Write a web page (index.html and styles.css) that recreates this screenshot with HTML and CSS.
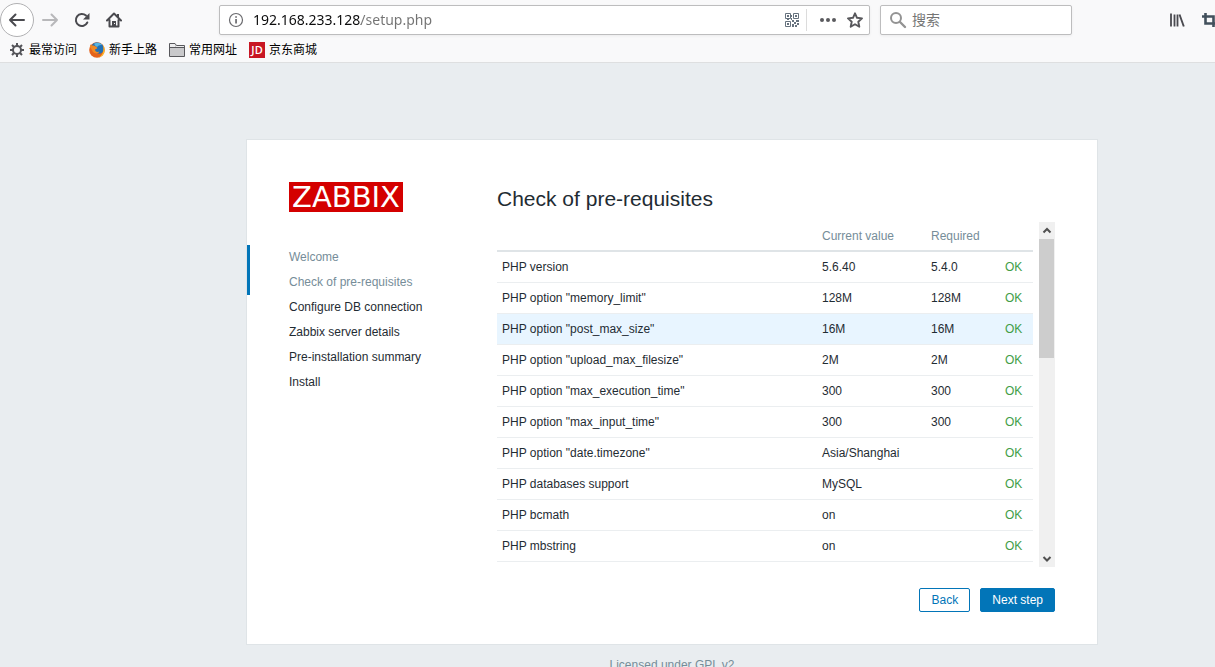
FILE: index.html
```html
<!DOCTYPE html>
<html lang="en">
<head>
<meta charset="utf-8">
<title>Installation</title>
<link rel="stylesheet" href="styles.css">
</head>
<body>
<header class="browser">
  <div class="toolbar">
    <div class="nav-buttons">
      <button class="tool tool-back" aria-label="Back"><svg width="18" height="16" viewBox="0 0 18 16"><path d="M16 8H2M7.500 2.500 2 8l5.500 5.500" fill="none" stroke="#4a4a4f" stroke-width="2" stroke-linecap="round" stroke-linejoin="round"/></svg></button>
      <button class="tool" aria-label="Forward"><svg width="18" height="16" viewBox="0 0 18 16"><path d="M2 8h14M10.500 2.500 16 8l-5.500 5.500" fill="none" stroke="#b8b8ba" stroke-width="2" stroke-linecap="round" stroke-linejoin="round"/></svg></button>
      <button class="tool" aria-label="Reload"><svg width="16" height="16" viewBox="0 0 16 16"><path d="M12 3.600A6 6 0 1 0 13.300 10.500" fill="none" stroke="#4a4a4f" stroke-width="2" stroke-linecap="round"/><path d="M15.500 1v6.500H9z" fill="#4a4a4f"/></svg></button>
      <button class="tool" aria-label="Home"><svg width="16" height="16" viewBox="0 0 16 16"><path d="M1 8.500 8 1.500l7 7M3.500 8v6.500h9V8" fill="none" stroke="#4a4a4f" stroke-width="2" stroke-linecap="round" stroke-linejoin="round"/><path d="M6 9h4v5H6zM11 2h2v4h-2z" fill="#4a4a4f"/><path d="M8 11h1v1H8z" fill="#f9f9fa"/></svg></button>
    </div>
    <div class="field address">
      <svg width="16" height="16" viewBox="0 0 16 16"><circle cx="8" cy="8" r="6.500" fill="none" stroke="#6a6a6e" stroke-width="1.200"/><path d="M7.200 7h1.700v4.500H7.200zM7.200 4.200h1.700v1.600H7.200z" fill="#6a6a6e"/></svg>
      <input class="address-input" type="text" aria-label="Address" value="192.168.233.128/setup.php">
      <button class="tool-small" aria-label="QR code"><svg width="16" height="16" viewBox="0 0 16 16"><path d="M1.500 1.500h5v5h-5zM9.500 1.500h5v5h-5zM1.500 9.500h5v5h-5z" fill="none" stroke="#66727e"/><path d="M3 3h2v2H3zM11 3h2v2h-2zM3 11h2v2H3zM8 8h2v2H8zM10 10h2v2h-2zM12 8h3v2h-3zM8 12h2v3H8zM11 13h2v2h-2zM13 11h2v2h-2zM7 3h1v2H7zM3 7h2v1H3zM7 6h1v2H7z" fill="#66727e"/></svg></button>
      <span class="divider"></span>
      <button class="tool-small" aria-label="Page actions"><svg width="18" height="16" viewBox="0 0 18 16" fill="#5a5a5e"><circle cx="3" cy="8" r="2"/><circle cx="9" cy="8" r="2"/><circle cx="15" cy="8" r="2"/></svg></button>
      <button class="tool-small" aria-label="Bookmark"><svg width="16" height="16" viewBox="0 0 16 16"><path d="M8 1.300l2 4.500 5 .6-3.700 3.400 1 4.900L8 12.200l-4.300 2.500 1-4.900L1 6.400l5-.6z" fill="none" stroke="#58585c" stroke-width="1.900" stroke-linejoin="round"/></svg></button>
    </div>
    <div class="field search">
      <svg width="18" height="18" viewBox="0 0 18 18"><circle cx="7" cy="7" r="5" fill="none" stroke="#939393" stroke-width="2"/><path d="M11 11l5 5" stroke="#939393" stroke-width="2.400" stroke-linecap="round"/></svg>
      <input class="search-input" type="text" aria-label="搜索" placeholder="搜索">
    </div>
    <div class="tool-extras">
      <button class="tool-small" aria-label="Library"><svg width="16" height="16" viewBox="0 0 16 16"><path d="M2 1.500v13M5.500 2.500v12M8.500 2.500v12" stroke="#4a4a4f" stroke-width="1.800"/><path d="M10.500 2.500l4.300 12" stroke="#4a4a4f" stroke-width="1.900"/></svg></button>
      <button class="tool-small" aria-label="Screenshot"><svg width="16" height="16" viewBox="0 0 16 16"><path d="M4.500 1v10.500H16M1 4.500h11.500V15" fill="none" stroke="#42505c" stroke-width="2.600"/></svg></button>
    </div>
  </div>
  <nav class="bookmarks">
    <a class="bookmark" href="#"><svg width="16" height="16" viewBox="0 0 16 16"><g stroke="#55555a" stroke-width="2"><path d="M8 1v14M1 8h14M3 3l10 10M13 3 3 13"/></g><circle cx="8" cy="8" r="4" fill="#f9f9fa" stroke="#55555a" stroke-width="2"/></svg>最常访问</a>
    <a class="bookmark" href="#"><svg width="16" height="16" viewBox="0 0 16 16"><circle cx="8" cy="8" r="7.800" fill="#e5631b"/><path d="M3.500 2.200C7-1 13 .5 14.500 5c.6 3-.5 6-3.500 6.800C7 12 5 9.500 5.500 7.500L8 6.500 6.500 4.500 3 4z" fill="#2270b5"/><path d="M5 1.800c3-2 7-1 8.500 1.500-2.500-.8-4 .2-5.500 1.700L6.500 4z" fill="#58b5e2"/><path d="M1 2c.5 1.200 1 1.500 2 1.500 1.500-.3 3 .2 3.700 1L8.500 6 6 7.500C6 9.500 8 10.500 10.500 9.500 9.500 12 6 12 4 10 3 8 2 6 1 5z" fill="#f08a24"/><path d="M14 3c3 4 2 11-4.500 12.600 4-2 6-6 4.500-12.600z" fill="#ffc22b"/></svg>新手上路</a>
    <a class="bookmark" href="#"><svg width="16" height="16" viewBox="0 0 16 16"><path d="M.5 14.500v-13h5.500l1.500 2h8v11z" fill="#c9c9cb" stroke="#58585c"/><path d="M1 5.500h14" stroke="#58585c"/><path d="M1 2h5v3H1zM7 4h8v1H7z" fill="#ededee"/></svg>常用网址</a>
    <a class="bookmark" href="#"><span class="jd">JD</span>京东商城</a>
  </nav>
</header>
<main class="page">
  <section class="card">
    <aside class="side">
      <div class="logo">ZABBIX</div>
      <ul class="steps">
        <li class="step step-done">Welcome</li>
        <li class="step step-done">Check of pre-requisites</li>
        <li class="step">Configure DB connection</li>
        <li class="step">Zabbix server details</li>
        <li class="step">Pre-installation summary</li>
        <li class="step">Install</li>
      </ul>
    </aside>
    <div class="content">
      <h1 class="title">Check of pre-requisites</h1>
      <div class="results">
        <table class="checks">
          <colgroup><col><col class="col-current"><col class="col-required"><col class="col-status"></colgroup>
          <thead><tr><th></th><th>Current value</th><th>Required</th><th></th></tr></thead>
          <tbody>
            <tr><td>PHP version</td><td>5.6.40</td><td>5.4.0</td><td class="ok">OK</td></tr>
            <tr><td>PHP option "memory_limit"</td><td>128M</td><td>128M</td><td class="ok">OK</td></tr>
            <tr class="hovered"><td>PHP option "post_max_size"</td><td>16M</td><td>16M</td><td class="ok">OK</td></tr>
            <tr><td>PHP option "upload_max_filesize"</td><td>2M</td><td>2M</td><td class="ok">OK</td></tr>
            <tr><td>PHP option "max_execution_time"</td><td>300</td><td>300</td><td class="ok">OK</td></tr>
            <tr><td>PHP option "max_input_time"</td><td>300</td><td>300</td><td class="ok">OK</td></tr>
            <tr><td>PHP option "date.timezone"</td><td>Asia/Shanghai</td><td></td><td class="ok">OK</td></tr>
            <tr><td>PHP databases support</td><td>MySQL</td><td></td><td class="ok">OK</td></tr>
            <tr><td>PHP bcmath</td><td>on</td><td></td><td class="ok">OK</td></tr>
            <tr><td>PHP mbstring</td><td>on</td><td></td><td class="ok">OK</td></tr>
          </tbody>
        </table>
        <div class="scrollbar">
          <svg width="16" height="17" viewBox="0 0 16 17"><path d="M4.500 10.500 8 7l3.500 3.500" fill="none" stroke="#505050" stroke-width="2"/></svg>
          <div class="scroll-track"><div class="scroll-thumb"></div></div>
          <svg width="16" height="17" viewBox="0 0 16 17"><path d="M4.500 7 8 10.500 11.500 7" fill="none" stroke="#505050" stroke-width="2"/></svg>
        </div>
      </div>
      <div class="actions">
        <button class="btn btn-alt">Back</button>
        <button class="btn">Next step</button>
      </div>
    </div>
  </section>
  <footer class="license">Licensed under GPL v2</footer>
</main>
</body>
</html>
```
FILE: styles.css
```css
* { box-sizing: border-box; }

body {
  margin: 0;
  height: 100vh;
  overflow: hidden;
  background: #e9edf0;
  color: #1f2c33;
  font: 12px/16px "Liberation Sans", Arial, sans-serif;
}

button { padding: 0; border: 0; background: none; font: inherit; }
svg { display: block; flex: none; }

/* Browser toolbar */
.browser {
  background: #f9f9fa;
  border-bottom: 1px solid #dedfe0;
  color: #000;
  font-family: "Noto Sans", "Noto Sans CJK SC", sans-serif;
}
.toolbar { display: flex; align-items: center; height: 40px; }
.nav-buttons { display: flex; align-items: center; width: 219px; flex: none; }
.tool { display: flex; align-items: center; justify-content: center; width: 32px; height: 32px; }
.tool-back { width: 34px; height: 34px; border: 1px solid #b1b1b3; border-radius: 50%; background: #fff; }
.tool-small { flex: none; }
.field {
  display: flex;
  align-items: center;
  min-width: 0;
  height: 30px;
  border: 1px solid #bdbdbe;
  border-radius: 2px;
  background: #fff;
  box-shadow: 0 1px 3px rgba(0, 0, 0, 0.06);
}
.field input { flex: 1; min-width: 0; padding: 0; border: 0; outline: 0; font: 14px/20px "Noto Sans", "Noto Sans CJK SC", sans-serif; }
.address { flex: 1; margin-right: 10px; padding: 0 6px 0 8px; }
.field .address-input {
  margin-left: 9px;
  background: linear-gradient(to right, #0c0c0d 108px, #737373 108px);
  -webkit-background-clip: text;
  background-clip: text;
  color: transparent;
}
.divider { width: 1px; height: 22px; margin: 0 12px 0 6px; background: #dcdcdc; }
.address .divider + .tool-small { margin-right: 10px; }
.search { flex: 0 0 192px; padding-left: 8px; }
.search-input { margin-left: 5px; }
.search-input::placeholder { color: #757575; }
.tool-extras { display: flex; gap: 16px; width: 46px; flex: none; margin-left: 97px; overflow: hidden; }
.bookmarks { display: flex; align-items: flex-end; gap: 12px; height: 22px; padding: 0 9px; }
.bookmark { display: flex; align-items: center; gap: 4px; height: 24px; color: #000; text-decoration: none; }
.jd { width: 16px; background: #c81623; color: #fff; font: 600 11px/16px "Open Sans", sans-serif; text-align: center; }

/* Setup page */
.page { padding: 76px 117px 0 246px; }
.card {
  display: flex;
  padding: 42px 42px 32px;
  border: 1px solid #dfe4e7;
  background: #fff;
}
.side { flex: 0 0 208px; }
.logo {
  width: 114px;
  height: 30px;
  background: #d40000;
  color: #fff;
  font: 29px/30px "DejaVu Sans", sans-serif;
  text-align: center;
}
.steps { margin: 33px 0 0 -42px; padding: 0; list-style: none; }
.step { padding-left: 39px; border-left: 3px solid transparent; line-height: 25px; }
.step-done { border-left-color: #0275b8; color: #768d99; }
.content { flex: 1; min-width: 0; }
.title { margin: 5px 0 11px; font-size: 21px; line-height: 24px; font-weight: normal; }
.results { display: flex; gap: 6px; min-height: 345px; }
.checks { flex: 1; align-self: flex-start; border-collapse: separate; border-spacing: 0; table-layout: fixed; }
.col-current { width: 109px; }
.col-required { width: 74px; }
.col-status { width: 33px; }
.checks th { height: 30px; padding: 0 5px; border-bottom: 2px solid #dfe4e7; color: #768d99; font-weight: normal; text-align: left; }
.checks td { height: 31px; padding: 0 5px; border-bottom: 1px solid #ebeef0; }
.hovered { background: #e8f5ff; }
.checks .ok { color: #429e47; }
.scrollbar { display: flex; flex-direction: column; width: 16px; background: #f0f0f0; }
.scroll-track { flex: 1; }
.scroll-thumb { width: 15px; height: 119px; background: #cdcdcd; }
.actions { display: flex; justify-content: flex-end; gap: 10px; margin-top: 21px; }
.btn { min-width: 51px; height: 24px; padding: 0 11px; border: 1px solid #0275b8; border-radius: 2px; background: #0275b8; color: #fff; }
.btn-alt { background: #fff; color: #0275b8; }
.license { margin-top: 12px; color: #768d99; text-align: center; }
```
